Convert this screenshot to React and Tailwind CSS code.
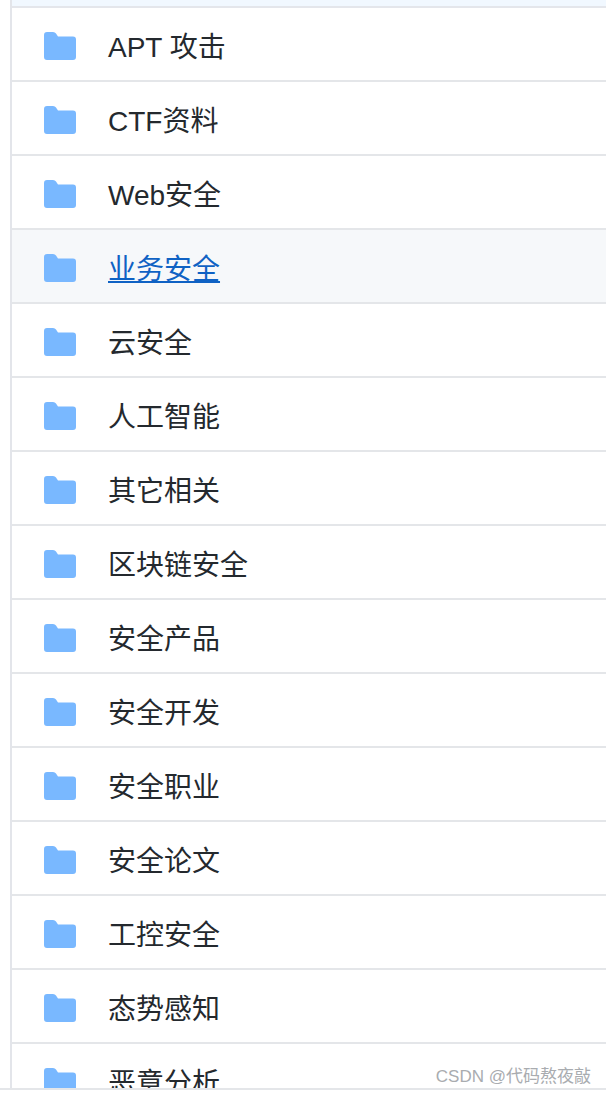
import React from 'react';

const rows = ['APT 攻击', 'CTF资料', 'Web安全', '业务安全', '云安全', '人工智能', '其它相关', '区块链安全', '安全产品', '安全开发', '安全职业', '安全论文', '工控安全', '态势感知', '恶意分析'];

const FolderIcon = () => (
  <svg className="w-8 h-7 shrink-0" viewBox="0 0 32 28" fill="#79b8ff">
    <path d="M0 3 Q0 0 3 0 H9 Q11 0 12 1.5 L14 4.5 H29 Q32 4.5 32 7.5 V25 Q32 28 29 28 H3 Q0 28 0 25 Z" />
  </svg>
);

export default function App() {
  return (
    <div className="relative h-[1094px] overflow-hidden bg-white font-['Liberation_Sans','Noto_Sans_CJK_SC',sans-serif]">
      <div className="ml-[10px] h-[1088px] overflow-hidden border-l-2 border-[#e3e5ea]">
        <div className="h-[8px] border-b-2 border-[#e4e6eb] bg-[#f1f8ff]" />
        {rows.map((name, i) => (
          <div
            key={name}
            className={`flex h-[74px] shrink-0 items-center gap-[32px] border-b-2 border-[#e4e6e9] pl-[32px] pt-[4px] ${i === 3 ? 'bg-[#f6f8fa]' : 'bg-white'}`}
          >
            <FolderIcon />
            {i === 3 ? (
              <a href="#" className="mt-[3px] text-[28px] leading-[36px] text-[#0f62c4] underline">{name}</a>
            ) : (
              <span className="mt-[3px] text-[28px] leading-[36px] text-[#24292e]">{name}</span>
            )}
          </div>
        ))}
      </div>
      <div className="h-[6px] border-t-2 border-[#e4e6e9] bg-white" />
      <div className="absolute right-[15px] top-[1066px] text-[17px] leading-[22px] text-[#a9acb0]">CSDN @代码熬夜敲</div>
    </div>
  );
}
